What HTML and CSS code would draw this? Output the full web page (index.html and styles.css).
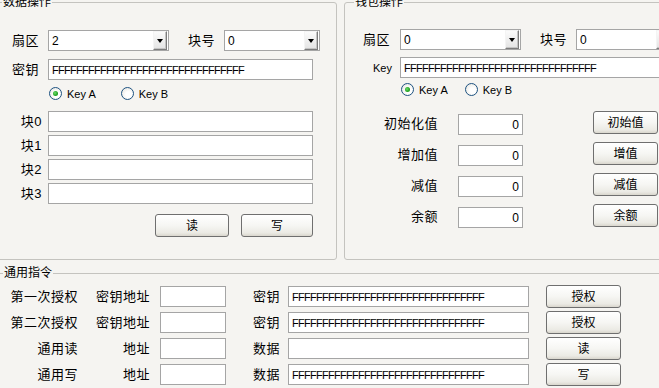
FILE: index.html
```html
<!DOCTYPE html>
<html lang="zh-CN">
<head>
<meta charset="utf-8">
<title>卡操作</title>
<link rel="stylesheet" href="styles.css">
</head>
<body>
<div class="screen">
  <div class="top">
    <fieldset class="grp grp-data">
      <legend>数据操作</legend>
      <div class="row d-r1">
        <span class="lbl d-lbl">扇区</span>
        <div class="combo w121"><span class="cval">2</span><span class="arrow"><i></i></span></div>
        <span class="lbl d-lbl2">块号</span>
        <div class="combo w96"><span class="cval">0</span><span class="arrow"><i></i></span></div>
      </div>
      <div class="row d-r2">
        <span class="lbl d-lbl">密钥</span>
        <div class="edit d-key"><span class="hex">FFFFFFFFFFFFFFFFFFFFFFFFFFFFFFFF</span></div>
      </div>
      <div class="row radios d-r3">
        <label class="radio"><span class="dot on"></span><span class="rtext">Key A</span></label>
        <label class="radio d-rb"><span class="dot"></span><span class="rtext">Key B</span></label>
      </div>
      <div class="d-blocks">
        <div class="row d-brow"><span class="lbl d-blbl">块0</span><div class="edit d-key"></div></div>
        <div class="row d-brow"><span class="lbl d-blbl">块1</span><div class="edit d-key"></div></div>
        <div class="row d-brow"><span class="lbl d-blbl">块2</span><div class="edit d-key"></div></div>
        <div class="row d-brow"><span class="lbl d-blbl">块3</span><div class="edit d-key"></div></div>
      </div>
      <div class="row d-btns">
        <button class="btn b74">读</button>
        <button class="btn b72">写</button>
      </div>
    </fieldset>
    <fieldset class="grp grp-wallet">
      <legend>钱包操作</legend>
      <div class="row w-r1">
        <span class="lbl w-lbl">扇区</span>
        <div class="combo w121"><span class="cval">0</span><span class="arrow"><i></i></span></div>
        <span class="lbl d-lbl2">块号</span>
        <div class="combo w96"><span class="cval">0</span><span class="arrow"><i></i></span></div>
      </div>
      <div class="row w-r2">
        <span class="lbl w-lbl w-key">Key</span>
        <div class="edit w-edit"><span class="hex">FFFFFFFFFFFFFFFFFFFFFFFFFFFFFFFF</span></div>
      </div>
      <div class="row radios w-r3">
        <label class="radio"><span class="dot on"></span><span class="rtext">Key A</span></label>
        <label class="radio w-rb"><span class="dot"></span><span class="rtext">Key B</span></label>
      </div>
      <div class="w-vals">
        <div class="row w-vrow"><span class="lbl w-vlbl">初始化值</span><div class="edit w-num">0</div><button class="btn w-btn">初始值</button></div>
        <div class="row w-vrow"><span class="lbl w-vlbl">增加值</span><div class="edit w-num">0</div><button class="btn w-btn">增值</button></div>
        <div class="row w-vrow"><span class="lbl w-vlbl">减值</span><div class="edit w-num">0</div><button class="btn w-btn">减值</button></div>
        <div class="row w-vrow"><span class="lbl w-vlbl">余额</span><div class="edit w-num">0</div><button class="btn w-btn">余额</button></div>
      </div>
    </fieldset>
  </div>
  <fieldset class="grp grp-common">
    <legend>通用指令</legend>
    <div class="row c-row">
      <span class="lbl c-l1">第一次授权</span><span class="lbl c-l2">密钥地址</span>
      <div class="edit c-addr"></div>
      <span class="lbl c-l3">密钥</span>
      <div class="edit c-data"><span class="hex">FFFFFFFFFFFFFFFFFFFFFFFFFFFFFFFF</span></div>
      <button class="btn c-btn">授权</button>
    </div>
    <div class="row c-row">
      <span class="lbl c-l1">第二次授权</span><span class="lbl c-l2">密钥地址</span>
      <div class="edit c-addr"></div>
      <span class="lbl c-l3">密钥</span>
      <div class="edit c-data"><span class="hex">FFFFFFFFFFFFFFFFFFFFFFFFFFFFFFFF</span></div>
      <button class="btn c-btn">授权</button>
    </div>
    <div class="row c-row">
      <span class="lbl c-l1">通用读</span><span class="lbl c-l2">地址</span>
      <div class="edit c-addr"></div>
      <span class="lbl c-l3">数据</span>
      <div class="edit c-data"></div>
      <button class="btn c-btn">读</button>
    </div>
    <div class="row c-row">
      <span class="lbl c-l1">通用写</span><span class="lbl c-l2">地址</span>
      <div class="edit c-addr"></div>
      <span class="lbl c-l3">数据</span>
      <div class="edit c-data"><span class="hex">FFFFFFFFFFFFFFFFFFFFFFFFFFFFFFFF</span></div>
      <button class="btn c-btn">写</button>
    </div>
  </fieldset>
</div>
</body>
</html>
```
FILE: styles.css
```css
html, body {
  margin: 0;
  padding: 0;
  background: #f5f4f1;
}
body {
  font-family: "Liberation Sans", "Noto Sans CJK SC", sans-serif;
  color: #000;
  line-height: 14px;
}
.screen {
  width: 659px;
  height: 388px;
  overflow: hidden;
  background: #f5f4f1;
}
.top {
  display: flex;
  gap: 7px;
  margin-left: -5px;
  margin-top: -5px;
}
.grp {
  box-sizing: border-box;
  margin: 0;
  padding: 0;
  min-width: 0;
  border: 1px solid #c4c3bf;
  border-radius: 3px;
  flex: none;
}
.grp legend {
  font-size: 12px;
  line-height: 14px;
  padding: 0 1px;
}
.grp-data {
  width: 342px;
  height: 265px;
  padding-left: 16px;
}
.grp-data legend { margin-left: -10px; }
.grp-wallet {
  width: 340px;
  height: 265px;
  padding-left: 18px;
}
.grp-wallet legend { margin-left: -9px; }
.grp-common {
  width: 690px;
  height: 140px;
  margin-left: -5px;
  margin-top: 6px;
}
.grp-common legend { margin-left: 7px; }
.row {
  display: flex;
  align-items: center;
}
.lbl {
  font-size: 13px;
  letter-spacing: 0.5px;
  white-space: nowrap;
  flex: none;
}
.combo {
  box-sizing: border-box;
  height: 21px;
  border: 1px solid #a5a5a5;
  background: #fff;
  display: flex;
  align-items: center;
  justify-content: space-between;
  flex: none;
}
.w121 { width: 121px; }
.w96 { width: 96px; }
.cval {
  font-size: 12px;
  padding-left: 3px;
}
.arrow {
  box-sizing: border-box;
  width: 14px;
  height: 19px;
  margin-right: 1px;
  border-top: 1px solid #f4f4f4;
  border-left: 1px solid #f4f4f4;
  border-right: 1px solid #7d7d7d;
  border-bottom: 1px solid #7d7d7d;
  box-shadow: inset -1px -1px 0 #c4c4c4;
  background: linear-gradient(#fbfbfb, #e4e4e4);
  display: flex;
  align-items: center;
  justify-content: center;
}
.arrow i {
  display: block;
  width: 0;
  height: 0;
  border-left: 3.5px solid transparent;
  border-right: 3.5px solid transparent;
  border-top: 4px solid #000;
  margin-top: 1px;
}
.edit {
  box-sizing: border-box;
  height: 21px;
  border: 1px solid #a5a5a5;
  background: #fff;
  display: flex;
  align-items: center;
  padding-left: 3px;
  flex: none;
}
.hex {
  font-size: 11px;
  letter-spacing: -0.72px;
  white-space: nowrap;
}
.radio {
  display: flex;
  align-items: center;
  gap: 5px;
}
.dot {
  box-sizing: border-box;
  width: 13px;
  height: 13px;
  border-radius: 50%;
  border: 1px solid #1d5281;
  background: radial-gradient(circle at 60% 60%, #ffffff 30%, #e2e1da 100%);
  display: flex;
  align-items: center;
  justify-content: center;
}
.dot.on::after {
  content: "";
  width: 5px;
  height: 5px;
  border-radius: 50%;
  background: radial-gradient(circle at 40% 40%, #5fd35f 10%, #21a121 60%);
}
.rtext {
  font-size: 11px;
}
.btn {
  box-sizing: border-box;
  height: 23px;
  margin: 0;
  padding: 0;
  border: 1px solid #6f6f6f;
  border-radius: 3px;
  background: linear-gradient(#ffffff 0%, #f6f6f3 50%, #ebeae4 85%, #d9d6cd 100%);
  font-family: "Liberation Sans", "Noto Sans CJK SC", sans-serif;
  font-size: 12px;
  line-height: 14px;
  color: #000;
  flex: none;
}

/* data group */
.d-r1 { margin-top: 21px; height: 21px; }
.d-lbl { width: 36px; }
.d-lbl2 { width: 36px; margin-left: 19px; }
.d-r2 { margin-top: 8px; height: 21px; }
.d-key { width: 265px; }
.d-r3 { margin-top: 7px; height: 13px; padding-left: 37px; }
.d-rb { margin-left: 25px; }
.d-blocks {
  margin-top: 11px;
  display: flex;
  flex-direction: column;
  gap: 3px;
}
.d-brow { height: 21px; }
.d-blbl { width: 36px; text-align: right; padding-right: 6px; box-sizing: border-box; }
.d-btns {
  margin-top: 10px;
  width: 301px;
  justify-content: flex-end;
  gap: 12px;
}
.b74 { width: 74px; }
.b72 { width: 72px; }

/* wallet group */
.w-r1 { margin-top: 20px; height: 21px; }
.w-lbl { width: 37px; }
.w-r2 { margin-top: 7px; height: 21px; }
.w-key { text-align: right; padding-right: 8px; box-sizing: border-box; font-size: 11px; letter-spacing: 0; }
.w-edit { width: 270px; }
.w-r3 { margin-top: 5px; height: 13px; padding-left: 38px; }
.w-rb { margin-left: 17px; }
.w-vals {
  margin-top: 15px;
  display: flex;
  flex-direction: column;
  gap: 8px;
}
.w-vrow { height: 23px; }
.w-vlbl { width: 76px; text-align: right; padding-right: 1px; box-sizing: border-box; margin-top: 3px; }
.w-num {
  width: 65px;
  margin-left: 19px;
  margin-top: 4px;
  justify-content: flex-end;
  padding-right: 3px;
  font-size: 12px;
}
.w-btn { width: 65px; margin-left: 70px; }

/* common group */
.c-row { height: 23px; margin-top: 3px; }
.c-row:first-of-type { margin-top: 5px; }
.c-l1 { width: 84px; text-align: right; padding-right: 2px; box-sizing: border-box; }
.c-l2 { width: 80px; text-align: right; padding-right: 10px; box-sizing: border-box; }
.c-addr { width: 66px; }
.c-l3 { width: 35px; margin-left: 27px; }
.c-data { width: 241px; }
.c-btn { width: 75px; margin-left: 17px; }
```
